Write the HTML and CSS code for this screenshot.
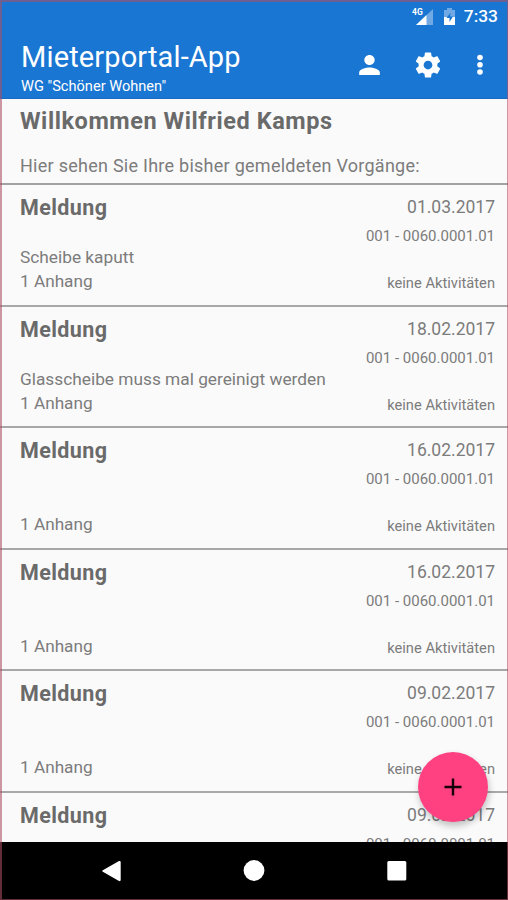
FILE: index.html
```html
<!DOCTYPE html>
<html lang="de">
<head>
<meta charset="utf-8">
<title>Mieterportal-App</title>
<link rel="stylesheet" href="styles.css">
</head>
<body>
<div class="phone">
  <header class="header">
    <div class="status">
      <svg class="signal" width="24" height="20" viewBox="0 0 24 20">
        <path d="M22 2V18H5z" fill="#70a9e3"/>
        <path d="M15.500 8V18H5z" fill="#fff"/>
        <text class="network" x="1" y="8">4G</text>
      </svg>
      <svg class="battery" width="14" height="18" viewBox="0 0 14 18">
        <path d="M4 0h5v2h3v7H1V2h3z" fill="#70a9e3"/>
        <path d="M1 9h11v8H1z" fill="#fff"/>
        <path d="M7.500 4.500L3.500 10h3v4L10 8.500H7z" fill="#1976d2"/>
      </svg>
      <span class="time">7:33</span>
    </div>
    <div class="appbar">
      <div class="titles">
        <h1 class="title">Mieterportal-App</h1>
        <p class="subtitle">WG "Schöner Wohnen"</p>
      </div>
      <div class="actions">
        <svg class="person" width="31" height="30" viewBox="0 0 24 24" preserveAspectRatio="none"><path d="M12 12c2.210 0 4-1.790 4-4s-1.790-4-4-4-4 1.790-4 4 1.790 4 4 4zm0 2c-2.670 0-8 1.340-8 4v2h16v-2c0-2.660-5.330-4-8-4z"/></svg>
        <svg class="gear" width="30" height="30" viewBox="0 0 24 24"><path d="M19.430 12.980c.04-.32.07-.64.07-.98s-.03-.66-.07-.98l2.110-1.650c.19-.15.24-.42.12-.64l-2-3.460c-.12-.22-.39-.3-.61-.22l-2.490 1c-.52-.4-1.080-.73-1.690-.98l-.38-2.650C14.460 2.180 14.250 2 14 2h-4c-.25 0-.46.18-.49.42l-.38 2.650c-.61.25-1.170.59-1.690.98l-2.490-1c-.23-.09-.49 0-.61.22l-2 3.460c-.13.22-.07.49.12.64l2.110 1.650c-.04.32-.07.65-.07.98s.03.66.07.98l-2.110 1.650c-.19.15-.24.42-.12.64l2 3.460c.12.22.39.3.61.22l2.490-1c.52.4 1.080.73 1.690.98l.38 2.650c.03.24.24.42.49.42h4c.25 0 .46-.18.49-.42l.38-2.650c.61-.25 1.170-.59 1.690-.98l2.490 1c.23.09.49 0 .61-.22l2-3.460c.12-.22.07-.49-.12-.64l-2.110-1.650zM12 15.500c-1.930 0-3.500-1.570-3.500-3.500s1.570-3.500 3.500-3.500 3.500 1.570 3.500 3.500-1.570 3.500-3.500 3.500z"/></svg>
        <svg class="more" width="8" height="24" viewBox="0 0 8 24"><circle cx="4" cy="4.500" r="2.800"/><circle cx="4" cy="11.800" r="2.800"/><circle cx="4" cy="19" r="2.800"/></svg>
      </div>
    </div>
  </header>
  <main class="content">
    <section class="intro">
      <h2 class="welcome">Willkommen Wilfried Kamps</h2>
      <p class="lead">Hier sehen Sie Ihre bisher gemeldeten Vorgänge:</p>
    </section>
    <article class="row">
      <div class="left"><h3 class="kind">Meldung</h3><p class="desc">Scheibe kaputt</p><p class="files">1 Anhang</p></div>
      <div class="right"><p class="date">01.03.2017</p><p class="unit">001 - 0060.0001.01</p><p class="activity">keine Aktivitäten</p></div>
    </article>
    <article class="row">
      <div class="left"><h3 class="kind">Meldung</h3><p class="desc">Glasscheibe muss mal gereinigt werden</p><p class="files">1 Anhang</p></div>
      <div class="right"><p class="date">18.02.2017</p><p class="unit">001 - 0060.0001.01</p><p class="activity">keine Aktivitäten</p></div>
    </article>
    <article class="row">
      <div class="left"><h3 class="kind">Meldung</h3><p class="desc"></p><p class="files">1 Anhang</p></div>
      <div class="right"><p class="date">16.02.2017</p><p class="unit">001 - 0060.0001.01</p><p class="activity">keine Aktivitäten</p></div>
    </article>
    <article class="row">
      <div class="left"><h3 class="kind">Meldung</h3><p class="desc"></p><p class="files">1 Anhang</p></div>
      <div class="right"><p class="date">16.02.2017</p><p class="unit">001 - 0060.0001.01</p><p class="activity">keine Aktivitäten</p></div>
    </article>
    <article class="row">
      <div class="left"><h3 class="kind">Meldung</h3><p class="desc"></p><p class="files">1 Anhang</p></div>
      <div class="right"><p class="date">09.02.2017</p><p class="unit">001 - 0060.0001.01</p><p class="activity">keine Aktivitäten</p></div>
    </article>
    <article class="row">
      <div class="left"><h3 class="kind">Meldung</h3></div>
      <div class="right"><p class="date">09.02.2017</p><p class="unit">001 - 0060.0001.01</p></div>
    </article>
  </main>
  <nav class="navbar">
    <svg width="22" height="22" viewBox="0 0 22 22"><path d="M2.800 10.200L19 1Q20.700 .5 20.700 2V20Q20.700 21.500 19 21L2.800 11.800Q1.500 11 2.800 10.200z"/></svg>
    <svg width="22" height="22" viewBox="0 0 22 22"><circle cx="11" cy="10.500" r="10.400"/></svg>
    <svg width="22" height="22" viewBox="0 0 22 22"><rect x="1.300" y="1" width="19" height="19.500" rx="1.500"/></svg>
  </nav>
  <button class="fab" aria-label="Neue Meldung"><svg width="18" height="18" viewBox="0 0 18 18"><path d="M9 .5v17M.5 9h17" stroke="#160009" stroke-width="2.400"/></svg></button>
</div>
</body>
</html>
```

FILE: styles.css
```css
* { box-sizing: border-box; }
body { margin: 0; font-family: Roboto, "Liberation Sans", sans-serif; }
h1, h2, h3, p { margin: 0; white-space: nowrap; }
.phone {
  position: relative;
  display: flex;
  flex-direction: column;
  width: 508px;
  height: 900px;
  overflow: hidden;
  background: #fafafa;
  color: #7c7c7c;
}
.phone::after {
  content: "";
  position: absolute;
  inset: 0;
  border: solid rgba(170, 80, 100, .58);
  border-width: 2px 1px 1px 2px;
  pointer-events: none;
}
.header { flex: none; height: 99px; background: #1976d2; color: #fff; border-bottom: 1px solid #176bc0; }
.status { display: flex; justify-content: flex-end; align-items: center; height: 33px; padding-right: 10px; }
.network { font: bold 8.5px Roboto, sans-serif; fill: #fff; }
.battery { margin: 0 7px 0 8px; }
.time { font-size: 17.4px; font-weight: 500; line-height: 33px; }
.appbar { display: flex; justify-content: space-between; height: 65px; padding: 0 24px 0 21px; }
.title { padding-top: 7px; font-size: 29px; font-weight: 400; line-height: 34px; letter-spacing: .13px; }
.subtitle { padding-top: 1px; font-size: 14.6px; line-height: 22px; }
.actions { display: flex; align-items: center; height: 64px; fill: #fff; }
.gear { margin: 0 33px 0 28px; }
.content { flex: none; height: 743px; overflow: hidden; }
.intro { height: 86px; padding-left: 20px; border-bottom: 2px solid #a3a1a1; }
.welcome { font-size: 23.5px; font-weight: 700; line-height: 44px; letter-spacing: .56px; color: #6a6a6a; }
.lead { padding-top: 8px; font-size: 18px; line-height: 30px; letter-spacing: .26px; }
.row { display: flex; justify-content: space-between; height: 121.5px; padding: 0 13px 0 20px; border-bottom: 2px solid #a9a7a7; }
.kind { font-size: 21.5px; font-weight: 700; line-height: 45px; letter-spacing: .4px; color: #6a6a6a; }
.desc { height: 24px; margin-top: 15px; font-size: 17.3px; line-height: 24px; }
.files { font-size: 17.2px; line-height: 24px; }
.right { text-align: right; }
.date { font-size: 17.5px; line-height: 45px; }
.unit { font-size: 15px; line-height: 13px; }
.activity { margin-top: 29px; font-size: 14.7px; line-height: 22px; }
.navbar { flex: none; display: flex; justify-content: center; align-items: center; gap: 121px; height: 58px; background: #000; fill: #fff; }
.fab {
  position: absolute;
  left: 418px;
  top: 752px;
  display: flex;
  align-items: center;
  justify-content: center;
  width: 70px;
  height: 70px;
  padding: 0;
  border: 0;
  border-radius: 50%;
  background: #ff4081;
  box-shadow: 1px 4px 7px rgba(0, 0, 0, .24);
}
```
